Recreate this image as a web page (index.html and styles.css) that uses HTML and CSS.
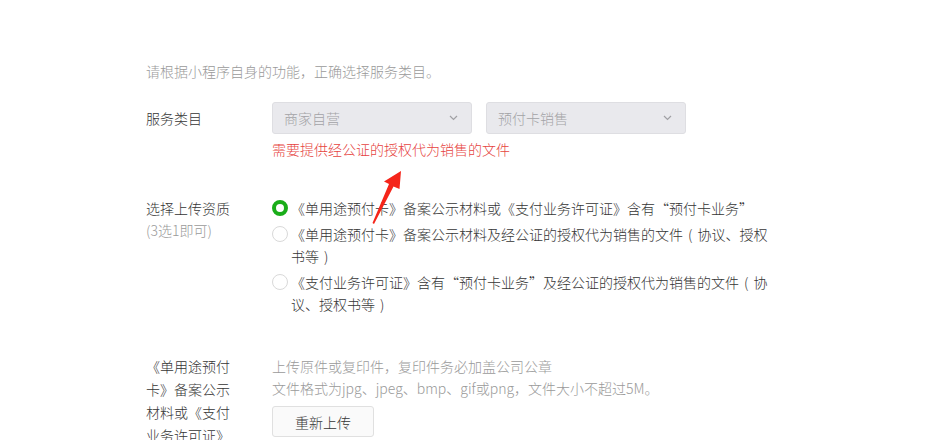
FILE: index.html
```html
<!DOCTYPE html>
<html lang="zh-CN">
<head>
<meta charset="utf-8">
<link rel="stylesheet" href="styles.css">
</head>
<body>
<div class="page">
  <p class="desc">请根据小程序自身的功能，正确选择服务类目。</p>

  <div class="row row-cat">
    <div class="label label-cat">服务类目</div>
    <div class="content">
      <div class="selects">
        <div class="select"><span>商家自营</span><svg class="chev" width="9" height="6" viewBox="0 0 9 6"><path d="M1 1l3.5 3.5L8 1" fill="none" stroke="#a0a0a4" stroke-width="1.2"/></svg></div>
        <div class="select"><span>预付卡销售</span><svg class="chev" width="9" height="6" viewBox="0 0 9 6"><path d="M1 1l3.5 3.5L8 1" fill="none" stroke="#a0a0a4" stroke-width="1.2"/></svg></div>
      </div>
      <p class="error">需要提供经公证的授权代为销售的文件</p>
    </div>
  </div>

  <div class="row row-radio">
    <div class="label">选择上传资质<br><span class="sub">(3选1即可)</span></div>
    <div class="content options">
      <div class="option"><span class="radio checked"></span><span class="opt-text">《单用途预付卡》备案公示材料或《支付业务许可证》含有“预付卡业务”</span></div>
      <div class="option"><span class="radio"></span><span class="opt-text">《单用途预付卡》备案公示材料及经公证的授权代为销售的文件 ( 协议、授权书等 )</span></div>
      <div class="option"><span class="radio"></span><span class="opt-text">《支付业务许可证》含有“预付卡业务”及经公证的授权代为销售的文件 ( 协议、授权书等 )</span></div>
    </div>
  </div>

  <div class="row row-upload">
    <div class="label label-upload">《单用途预付卡》备案公示材料或《支付业务许可证》</div>
    <div class="content">
      <p class="hint">上传原件或复印件，复印件务必加盖公司公章<br>文件格式为jpg、jpeg、bmp、gif或png，文件大小不超过5M。</p>
      <button class="btn">重新上传</button>
    </div>
  </div>

  <svg class="arrow" width="60" height="80" viewBox="0 0 60 80">
    <polygon points="41,11 39.5,29 33.5,26.5 14,64 12.5,63 29,24 24,21.5" fill="#f5251a"/>
  </svg>
</div>
</body>
</html>
```

FILE: styles.css
```css
html, body {
  margin: 0;
  padding: 0;
  background: #fff;
}
.page {
  position: relative;
  padding: 60px 0 0 146px;
  font-family: "Noto Sans CJK SC", "Noto Sans", sans-serif;
  font-size: 14px;
  font-weight: 300;
  color: #353535;
}
p { margin: 0; }
.desc {
  line-height: 22px;
  color: #9a9a9a;
}
.row {
  display: flex;
}
.label {
  width: 126px;
  flex: none;
  line-height: 22px;
}
.label-cat { line-height: 32px; }
.row-cat { margin-top: 20px; }
.selects {
  display: flex;
  gap: 14px;
}
.select {
  box-sizing: border-box;
  width: 200px;
  height: 32px;
  border: 1px solid #dedee2;
  border-radius: 3px;
  background: #e9e9ed;
  display: flex;
  align-items: center;
  justify-content: space-between;
  padding: 0 13px 0 11px;
  color: #a3a3a6;
}
.error {
  margin-top: 4px;
  line-height: 22px;
  color: #e64340;
}
.row-radio { margin-top: 37px; }
.sub { color: #9a9a9a; }
.options {
  width: 500px;
}
.option {
  display: flex;
  align-items: flex-start;
  line-height: 22px;
  margin-top: 4px;
}
.option:first-child { margin-top: 0; }
.radio {
  box-sizing: border-box;
  flex: none;
  width: 16px;
  height: 16px;
  margin: 3px 3px 0 0;
  border: 1px solid #d9d9d9;
  border-radius: 50%;
  background: #fff;
}
.radio.checked {
  border: 4.5px solid #1aad19;
}
.opt-text {
  width: 482px;
  word-spacing: 2px;
}
.row-upload { margin-top: 40px; }
.label-upload {
  width: 84px;
  margin-right: 42px;
  line-height: 23px;
}
.hint {
  line-height: 22px;
  color: #9a9a9a;
}
.btn {
  margin-top: 7px;
  box-sizing: border-box;
  width: 102px;
  height: 31px;
  border: 1px solid #e0e0e0;
  border-radius: 3px;
  background: #fafafa;
  font-family: inherit;
  font-size: 14px;
  font-weight: 300;
  color: #353535;
  padding: 0;
}
.arrow {
  position: absolute;
  left: 360px;
  top: 160px;
}
```
